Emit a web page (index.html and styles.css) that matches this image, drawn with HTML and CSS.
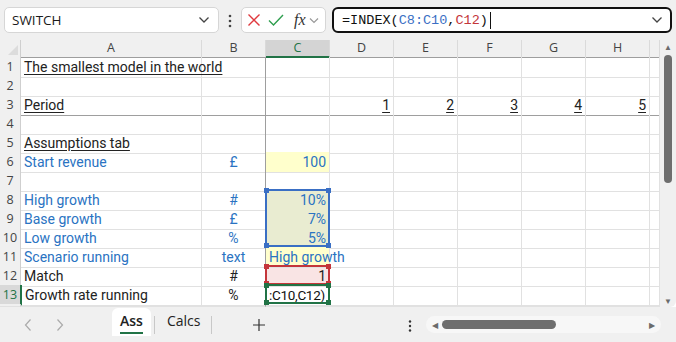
FILE: index.html
```html
<!DOCTYPE html>
<html lang="en">
<head>
    <meta charset="UTF-8">
    <title>Book - Ass</title>
    <link rel="stylesheet" href="styles.css">
</head>
<body>
    <!-- Name box + formula bar -->
    <div class="topbar">
        <div class="namebox">
            <span>SWITCH</span>
            <svg width="12" height="8" viewBox="0 0 12 8"><path d="M1.5 1.5 L6 6 L10.5 1.5" fill="none" stroke="#444" stroke-width="1.3"/></svg>
        </div>
        <div class="kebab">
            <svg width="4" height="14" viewBox="0 0 4 14"><circle cx="2" cy="2" r="1.3" fill="#444"/><circle cx="2" cy="7" r="1.3" fill="#444"/><circle cx="2" cy="12" r="1.3" fill="#444"/></svg>
        </div>
        <div class="fxbox">
            <svg width="14" height="14" viewBox="0 0 14 14"><path d="M1.5 1.5 L12.5 12.5 M12.5 1.5 L1.5 12.5" stroke="#e0393e" stroke-width="1.4"/></svg>
            <svg width="16" height="14" viewBox="0 0 16 14"><path d="M1 7.5 L5.5 12 L15 2" fill="none" stroke="#2e9e4e" stroke-width="1.4"/></svg>
            <span class="fx">fx</span>
            <svg width="10" height="7" viewBox="0 0 10 7"><path d="M1 1.5 L5 5.5 L9 1.5" fill="none" stroke="#999" stroke-width="1.2"/></svg>
        </div>
        <div class="formula">
            <span>=INDEX(<b class="ref-blue">C8:C10</b>,<b class="ref-red">C12</b>)</span><i class="caret"></i>
            <svg class="formula-chev" width="12" height="8" viewBox="0 0 12 8"><path d="M1.5 1.5 L6 6 L10.5 1.5" fill="none" stroke="#444" stroke-width="1.3"/></svg>
        </div>
    </div>

    <div class="sheet">
        <div class="grid">
            <div class="row head">
                <div class="rh corner"></div>
                <div>A</div><div class="frz">B</div><div class="cur">C</div><div>D</div><div>E</div><div>F</div><div>G</div><div>H</div><div></div>
            </div>
            <div class="row">
                <div class="rh">1</div>
                <div class="u">The smallest model in the world</div><div class="frz"></div><div></div><div></div><div></div><div></div><div></div><div></div><div></div>
            </div>
            <div class="row">
                <div class="rh">2</div>
                <div></div><div class="frz"></div><div></div><div></div><div></div><div></div><div></div><div></div><div></div>
            </div>
            <div class="row frz-row">
                <div class="rh">3</div>
                <div class="u">Period</div><div class="frz"></div><div></div>
                <div class="num"><span class="u">1</span></div><div class="num"><span class="u">2</span></div><div class="num"><span class="u">3</span></div><div class="num"><span class="u">4</span></div><div class="num"><span class="u">5</span></div><div></div>
            </div>
            <div class="row">
                <div class="rh">4</div>
                <div></div><div class="frz"></div><div></div><div></div><div></div><div></div><div></div><div></div><div></div>
            </div>
            <div class="row">
                <div class="rh">5</div>
                <div class="u">Assumptions tab</div><div class="frz"></div><div></div><div></div><div></div><div></div><div></div><div></div><div></div>
            </div>
            <div class="row blue">
                <div class="rh">6</div>
                <div>Start revenue</div><div class="frz mid">£</div><div class="num input">100</div><div></div><div></div><div></div><div></div><div></div><div></div>
            </div>
            <div class="row">
                <div class="rh">7</div>
                <div></div><div class="frz"></div><div></div><div></div><div></div><div></div><div></div><div></div><div></div>
            </div>
            <div class="row blue">
                <div class="rh">8</div>
                <div>High growth</div><div class="frz mid">#</div>
                <div class="num picked">10%
                    <span class="box box-blue"><i class="h tl"></i><i class="h tr"></i><i class="h bl"></i><i class="h br"></i></span>
                </div>
                <div></div><div></div><div></div><div></div><div></div><div></div>
            </div>
            <div class="row blue">
                <div class="rh">9</div>
                <div>Base growth</div><div class="frz mid">£</div><div class="num picked">7%</div><div></div><div></div><div></div><div></div><div></div><div></div>
            </div>
            <div class="row blue">
                <div class="rh">10</div>
                <div>Low growth</div><div class="frz mid">%</div><div class="num picked">5%</div><div></div><div></div><div></div><div></div><div></div><div></div>
            </div>
            <div class="row blue">
                <div class="rh">11</div>
                <div>Scenario running</div><div class="frz mid">text</div><div class="input spill">High growth</div><div></div><div></div><div></div><div></div><div></div><div></div>
            </div>
            <div class="row">
                <div class="rh">12</div>
                <div>Match</div><div class="frz mid">#</div>
                <div class="num match">1
                    <span class="box box-red"><i class="h tl"></i><i class="h tr"></i><i class="h bl"></i><i class="h br"></i></span>
                </div>
                <div></div><div></div><div></div><div></div><div></div><div></div>
            </div>
            <div class="row active">
                <div class="rh">13</div>
                <div>Growth rate running</div><div class="frz mid">%</div>
                <div class="editing">:C10,C12)
                    <span class="box box-green"><i class="h tl"></i><i class="h tr"></i><i class="h bl"></i><i class="h br"></i></span>
                </div>
                <div></div><div></div><div></div><div></div><div></div><div></div>
            </div>
            <div class="row stub">
                <div class="rh"></div>
                <div></div><div class="frz"></div><div></div><div></div><div></div><div></div><div></div><div></div><div></div>
            </div>
        </div>

        <!-- Vertical scrollbar -->
        <div class="vscroll">
            <span class="arrow">&#9650;</span>
            <span class="vthumb"></span>
            <span class="spacer"></span>
            <span class="arrow">&#9660;</span>
        </div>
    </div>

    <!-- Sheet tabs -->
    <div class="tabbar">
        <div class="nav">
            <svg width="10" height="14" viewBox="0 0 10 14"><path d="M7.5 1.5 L2.5 7 L7.5 12.5" fill="none" stroke="#aaa" stroke-width="1.2"/></svg>
            <svg width="10" height="14" viewBox="0 0 10 14"><path d="M2.5 1.5 L7.5 7 L2.5 12.5" fill="none" stroke="#aaa" stroke-width="1.2"/></svg>
        </div>
        <div class="tab on">Ass</div>
        <span class="sep"></span>
        <div class="tab calcs">Calcs</div>
        <span class="sep"></span>
        <div class="plus">
            <svg width="12" height="12" viewBox="0 0 12 12"><path d="M6 0 V12 M0 6 H12" stroke="#333" stroke-width="1.2"/></svg>
        </div>
        <div class="kebab small">
            <svg width="4" height="12" viewBox="0 0 4 12"><circle cx="2" cy="1.5" r="1.2" fill="#333"/><circle cx="2" cy="6" r="1.2" fill="#333"/><circle cx="2" cy="10.5" r="1.2" fill="#333"/></svg>
        </div>
        <div class="hscroll">
            <span class="arrow">&#9664;</span>
            <span class="hthumb"></span>
            <span class="spacer"></span>
            <span class="arrow">&#9654;</span>
        </div>
    </div>
</body>
</html>
```

FILE: styles.css
```css
body {
    margin: 0;
    width: 676px;
    height: 342px;
    overflow: hidden;
    background-color: #f0f0f0;
    font-family: "Segoe UI", "Open Sans", Arial, sans-serif;
    color: #222;
}

/* Formula bar */
.topbar {
    display: flex;
    align-items: center;
    height: 40px;
    padding: 0 4px;
    box-sizing: border-box;
}
.namebox {
    width: 215px;
    height: 26px;
    box-sizing: border-box;
    background: #fff;
    border: 1px solid #d6d6d6;
    border-radius: 5px;
    display: flex;
    align-items: center;
    justify-content: space-between;
    padding: 0 8px 0 7px;
    font-size: 13.5px;
    color: #1a1a1a;
}
.kebab {
    width: 22px;
    display: flex;
    justify-content: center;
    padding-top: 2px;
}
.fxbox {
    width: 85px;
    height: 26px;
    box-sizing: border-box;
    background: #fff;
    border: 1px solid #d6d6d6;
    border-radius: 5px;
    display: flex;
    align-items: center;
    gap: 7px;
    padding: 0 4px 0 5px;
}
.fx {
    font-family: "Liberation Serif", serif;
    font-style: italic;
    font-size: 16px;
    color: #333;
    margin-left: 3px;
    margin-right: -4px;
}
.formula {
    flex: 1;
    margin-left: 6px;
    height: 26px;
    box-sizing: border-box;
    border: 2px solid #111;
    border-radius: 6px;
    background: #fff;
    display: flex;
    align-items: center;
    padding: 0 7px 0 8px;
    font-family: "Liberation Mono", monospace;
    font-size: 13.5px;
    color: #111;
}
.formula b {
    font-weight: normal;
}
.ref-blue { color: #3a6fc4; }
.ref-red { color: #c4353a; }
.caret {
    width: 1px;
    height: 17px;
    background: #111;
    margin-left: 2px;
}
.formula-chev {
    margin-left: auto;
}

/* Grid */
.sheet {
    display: flex;
    height: 267px;
    background: #fff;
}
.grid {
    width: 660px;
    overflow: hidden;
    font-family: "Roboto", "Open Sans", sans-serif;
    font-size: 14px;
}
.row {
    display: grid;
    grid-template-columns: 21px 181px 64px 64px 64px 64px 64px 64px 64px 10px;
    height: 19px;
}
.row > div {
    box-sizing: border-box;
    border-right: 1px solid #e1e1e1;
    border-bottom: 1px solid #e1e1e1;
    padding: 0 3px;
    line-height: 20px;
    white-space: nowrap;
    position: relative;
}
.row > .frz {
    border-right-color: #9e9e9e;
}
.frz-row > div {
    border-bottom-color: #9e9e9e;
}
.frz-row > .rh {
    border-bottom-color: #e1e1e1;
}
.head {
    height: 17px;
    background: #f0f0f0;
    font-family: "Segoe UI", "Open Sans", sans-serif;
    font-size: 12.5px;
    color: #444;
}
.head > div,
.head > .frz {
    text-align: center;
    line-height: 16px;
    border-bottom-color: #9e9e9e;
    border-right-color: #dadada;
}
.head > .cur {
    background: #d4d4d4;
    color: #217346;
    border-bottom: 2px solid #217346;
}
.row > .rh {
    background: #f0f0f0;
    padding: 0;
    text-align: center;
    font-family: "Segoe UI", "Open Sans", sans-serif;
    font-size: 12.5px;
    color: #444;
    border-right-color: #cfcfcf;
}
.corner::after {
    content: "";
    position: absolute;
    right: 2px;
    bottom: 2px;
    border-style: solid;
    border-width: 0 0 10px 10px;
    border-color: transparent transparent #dcdcdc transparent;
}
.u {
    text-decoration: underline;
    text-underline-offset: 2px;
}
.num {
    text-align: right;
}
.mid {
    text-align: center;
}
.blue > div {
    color: #2a73c2;
}
.blue > .rh {
    color: #444;
}
.input {
    background: #ffffcc;
}
.spill {
    overflow: visible;
    z-index: 1;
}
.picked {
    background: #e9ecd1;
}
.match {
    background: #f9e4e4;
}
.active > .rh {
    background: #d9d9d9;
    color: #217346;
}
.active > div:nth-child(2) {
    border-left: 2px solid #217346;
    margin-left: -1px;
}
.row > .editing {
    padding: 0 0 0 3px;
    font-size: 13.5px;
    letter-spacing: -0.3px;
    color: #111;
}
.stub {
    height: 3px;
}

/* Reference boxes drawn over column C */
.box {
    position: absolute;
    left: -1px;
    top: -1px;
    width: 65px;
    height: 20px;
    box-sizing: border-box;
    border: 2px solid;
    z-index: 2;
}
.box-blue {
    border-color: #3a6fc4;
    height: 58px;
}
.box-red {
    border-color: #c4353a;
}
.box-green {
    border-color: #217346;
}
.h {
    position: absolute;
    width: 5px;
    height: 5px;
}
.box-blue .h { background: #3a6fc4; }
.box-red .h { background: #c4353a; }
.box-green .h { background: #217346; }
.tl { left: -3px; top: -3px; }
.tr { right: -3px; top: -3px; }
.bl { left: -3px; bottom: -3px; }
.br { right: -3px; bottom: -3px; }

/* Scrollbars */
.vscroll {
    width: 16px;
    background: #f0f0f0;
    display: flex;
    flex-direction: column;
    align-items: center;
    padding: 2px 0 1px;
    box-sizing: border-box;
    border-bottom-right-radius: 6px;
}
.arrow {
    font-size: 8px;
    color: #6b6b6b;
    line-height: 10px;
}
.vthumb {
    width: 8px;
    height: 128px;
    margin-top: 3px;
    background: #6e6e6e;
    border-radius: 4px;
}
.spacer {
    flex: 1;
}

/* Tabs */
.tabbar {
    height: 35px;
    display: flex;
    align-items: center;
    font-family: "Segoe UI", "Open Sans", sans-serif;
    font-size: 14px;
    color: #222;
}
.nav {
    width: 112px;
    display: flex;
    gap: 22px;
    padding-left: 23px;
    box-sizing: border-box;
}
.tab {
    padding: 0 8px;
    height: 28px;
    line-height: 26px;
    align-self: flex-end;
    margin-bottom: 6px;
}
.tab.on {
    background: #fff;
    border-radius: 6px 6px 0 0;
    font-weight: 600;
    position: relative;
}
.tab.on::after {
    content: "";
    position: absolute;
    left: 8px;
    right: 8px;
    bottom: 2px;
    height: 2px;
    background: #217346;
}
.tab.calcs {
    padding: 0 8px 0 9px;
}
.sep {
    width: 1px;
    height: 18px;
    background: #c8c8c8;
    margin: 0 3px;
}
.plus {
    width: 88px;
    display: flex;
    justify-content: center;
}
.kebab.small {
    width: 20px;
    margin-left: 97px;
}
.hscroll {
    margin-left: 6px;
    width: 235px;
    height: 17px;
    background: #f7f7f7;
    border-radius: 9px;
    display: flex;
    align-items: center;
    padding: 0 6px;
    box-sizing: border-box;
}
.hthumb {
    width: 114px;
    height: 9px;
    margin-left: 4px;
    background: #6e6e6e;
    border-radius: 5px;
}
```
